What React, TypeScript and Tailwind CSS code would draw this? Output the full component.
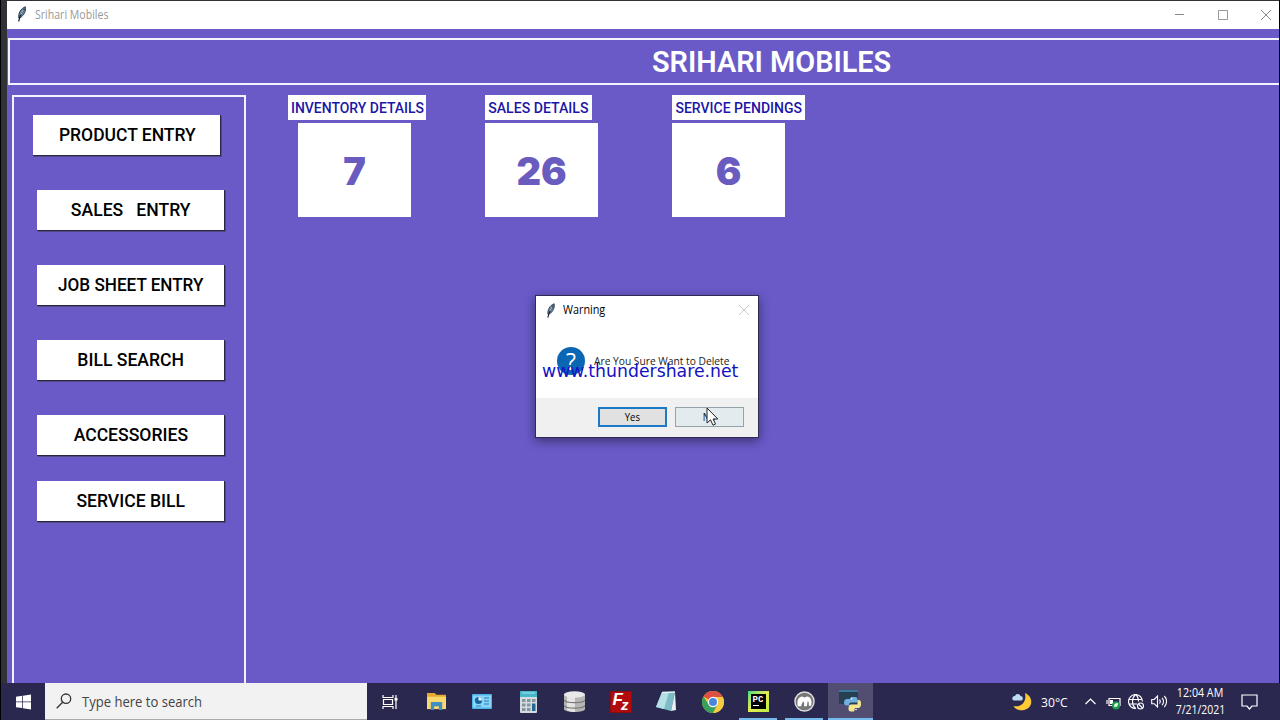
import type {ReactNode} from 'react';

const menuItems = [
  { label: 'PRODUCT ENTRY', place: 'mt-[18px] ml-[19px]', text: 'scale-x-[0.92]' },
  { label: 'SALES   ENTRY', place: 'mt-[34px] ml-[23px]', text: 'scale-x-[0.925]' },
  { label: 'JOB SHEET ENTRY', place: 'mt-[34px] ml-[23px]', text: 'scale-x-[0.9]' },
  { label: 'BILL SEARCH', place: 'mt-[34px] ml-[23px]', text: 'scale-x-[0.925]' },
  { label: 'ACCESSORIES', place: 'mt-[34px] ml-[23px]', text: 'scale-x-[0.925]' },
  { label: 'SERVICE BILL', place: 'mt-[25px] ml-[23px]', text: 'scale-x-[0.925]' },
];

const stats = [
  { label: 'INVENTORY DETAILS', value: 7, labelWidth: 'w-[138px]', column: 'w-[197px]', box: 'ml-[10px]', text: 'scale-x-[0.93]' },
  { label: 'SALES DETAILS', value: 26, labelWidth: 'w-[107px]', column: 'w-[187px]', box: '', text: 'scale-x-[0.94]' },
  { label: 'SERVICE PENDINGS', value: 6, labelWidth: 'w-[133px]', column: 'w-[187px]', box: '', text: 'scale-x-[0.935]' },
];

const Feather = ({ className }: { className?: string }) => (
  <svg viewBox="0 0 12 16" className={className}>
    <path d="M2.800 12C2 8 4.500 2.500 9.300.8c1 4-1.300 8.500-5 10.900z" fill="#6f8ba5" stroke="#1d2f44" strokeWidth=".9" />
    <path d="M2.600 15.500 4 10.500 8.500 2.800" fill="none" stroke="#101820" strokeWidth="1.100" />
    <path d="M5 8.500 7.500 4" stroke="#c9dbe8" strokeWidth=".9" />
  </svg>
);

const TitleBar = () => (
  <div className="h-7 bg-white flex items-center text-[#999]">
    <Feather className="ml-[9px] w-3 h-4 -mt-0.5" />
    <span className="ml-[7px] text-[12px] whitespace-pre origin-left scale-x-[0.88]">Srihari Mobiles</span>
    <div className="ml-auto flex items-center gap-[33px] pr-[8px]">
      <svg className="w-[10px] h-[10px]" viewBox="0 0 10 10"><path d="M0 4.500h9" stroke="#888" /></svg>
      <svg className="w-[10px] h-[10px]" viewBox="0 0 10 10"><path d="M.5.5h9v9h-9z" stroke="#999" fill="none" /></svg>
      <svg className="w-[10px] h-[10px]" viewBox="0 0 10 10"><path d="m0 0 10 10M10 0 0 10" stroke="#888" /></svg>
    </div>
  </div>
);

const Sidebar = () => (
  <div className="w-[234px] shrink-0 border-2 border-b-0 border-[#f4f2ff]">
    {menuItems.map(item => (
      <div
        key={item.label}
        className={`${item.place} w-[188px] h-[41px] bg-white border-r border-b border-[#29263f] shadow-[1px_1px_0_#514a86] flex items-center justify-center`}
      >
        <span className={`${item.text} mt-[1px] ml-[1px] whitespace-pre font-[Roboto] font-medium text-[19px] text-black`}>{item.label}</span>
      </div>
    ))}
  </div>
);

const StatCard = ({ stat }: { stat: (typeof stats)[number] }) => (
  <div className={`${stat.column} shrink-0`}>
    <div className={`${stat.labelWidth} h-[25px] bg-white flex items-center justify-center`}>
      <span className={`${stat.text} mt-[1px] whitespace-pre font-[Roboto] font-medium text-[15px] text-[#1c16a6]`}>{stat.label}</span>
    </div>
    <div className={`${stat.box} mt-[3px] w-[113px] h-[94px] bg-white flex items-center justify-center`}>
      <span className="font-[Inter] font-black text-[38px] leading-none text-[#6a5bbf] mt-0.5">{stat.value}</span>
    </div>
  </div>
);

const WarningDialog = () => (
  <div className="absolute left-[534px] top-[295px] w-[224px] h-[143px] bg-white border border-[#302a55] shadow-[0_3px_10px_rgba(0,0,0,0.45)] flex flex-col">
    <div className="h-[28px] flex items-center">
      <Feather className="ml-[9px] w-3 h-[15px]" />
      <span className="ml-[6px] text-[12px] text-black origin-left scale-x-[0.9]">Warning</span>
      <svg className="ml-auto mr-[9px] w-[10px] h-[10px]" viewBox="0 0 10 10">
        <path d="m0 0 10 10M10 0 0 10" stroke="#ccc" />
      </svg>
    </div>
    <div className="flex-1 flex items-center pl-[21px]">
      <div className="w-7 h-7 shrink-0 rounded-full bg-[#0b66b4] text-white text-[23px] leading-7 text-center">?</div>
      <span className="ml-[9px] mt-[1px] text-[11px] whitespace-pre text-[#222] origin-left scale-x-[0.93]">Are You Sure Want to Delete</span>
    </div>
    <div className="h-[39px] bg-[#f0f0f0] flex justify-end gap-2 pt-[9px] pr-[14px] text-[10.500px] text-black">
      <div className="w-[69px] h-[20px] border-2 border-[#1d78c8] bg-[#e1e1e1] flex items-center justify-center">
        <span className="scale-x-90 mt-[2px]">Yes</span>
      </div>
      <div className="w-[69px] h-[20px] border border-[#93a3aa] bg-[#e4ebee] flex items-center justify-center">
        <span className="scale-x-90 mt-[2px]">No</span>
      </div>
    </div>
    <span className="absolute left-[6px] top-[63px] whitespace-pre font-['DejaVu_Sans'] text-[18px] leading-6 text-[#1111c4] origin-left scale-x-[0.96]">
      www.thundershare.net
    </span>
    <svg className="absolute left-[170px] top-[111px] w-[13px] h-[19px]" viewBox="0 0 13 19">
      <path d="M1 1v15l3.500-3.200 2.500 5.400 2.500-1.100-2.400-5.100h4.700z" fill="#fff" stroke="#222" />
    </svg>
  </div>
);

const TaskSlot = ({ children, className = '' }: { children: ReactNode; className?: string }) => (
  <div className={`w-[46px] h-full flex items-center justify-center ${className}`}>{children}</div>
);

const RunningSlot = ({ children, active = false }: { children: ReactNode; active?: boolean }) => (
  <div className="w-[46px] h-full flex flex-col items-center">
    <div className={`flex-1 w-[45px] flex items-center justify-center pt-[1px] ${active ? 'bg-[#524e72]' : ''}`}>{children}</div>
    <div className={`h-[2px] bg-[#76b9ed] ${active ? 'w-[45px]' : 'w-[38px]'}`} />
  </div>
);

const Taskbar = () => (
  <div className="h-[37px] shrink-0 bg-[#2b2850] flex items-center text-white">
    <div className="w-[44px] flex justify-center">
      <svg className="w-[15px] h-4" viewBox="0 0 16 16">
        <path d="M0 2.300 6.600 1.300v6.200H0zM7.400 1.200 16 0v7.500H7.400zM0 8.300h6.600v6.200L0 13.600zM7.400 8.300H16V16l-8.600-1.300z" fill="#fff" />
      </svg>
    </div>
    <div className="w-[322px] h-full bg-[#f2f2f2] border-b border-[#aaa] flex items-center">
      <svg className="ml-[11px] w-4 h-4" viewBox="0 0 16 16" fill="none" stroke="#333" strokeWidth="1.300">
        <circle cx="10" cy="5.700" r="4.700" />
        <path d="M6.600 9.200.7 15.300" />
      </svg>
      <span className="ml-[10px] mt-[1px] whitespace-pre text-[14.500px] text-[#444] origin-left scale-x-[0.9]">Type here to search</span>
    </div>
    <TaskSlot>
      <svg className="w-4 h-4" viewBox="0 0 16 16" fill="none" stroke="#fff" strokeWidth="1.200">
        <path d="M1 1v2.500h10V1M1 15v-2.500h10V15M1.500 5.500h9v5h-9zM14 1v14" />
        <path d="M12.500 4h3v2.500h-3z" fill="#fff" stroke="none" />
      </svg>
    </TaskSlot>
    <TaskSlot>
      <svg className="w-[21px] h-[19px]" viewBox="0 0 22 20">
        <path d="M1 1h8l2 2h10v15H1z" fill="#e8a92f" />
        <path d="M1 5h20v13H1z" fill="#fbd86b" />
        <path d="M5 19v-8.500h12V19h-3.500v-4h-5v4z" fill="#3f8fc4" />
      </svg>
    </TaskSlot>
    <TaskSlot>
      <svg className="w-5 h-[15px]" viewBox="0 0 20 15">
        <rect width="20" height="15" rx="1" fill="#4ab4e8" />
        <rect x="1" y="1.500" width="18" height="12" fill="#8bd4f5" />
        <circle cx="6.500" cy="6.500" r="3.600" fill="#17659f" />
        <path d="M6.500 6.500V2.900a3.600 3.600 0 0 1 3.600 3.600z" fill="#dff5ff" />
        <path d="M12 4h5M12 7h5M4 12h5M12 10h5" stroke="#257eb9" strokeWidth="1.200" />
      </svg>
    </TaskSlot>
    <TaskSlot>
      <svg className="w-[17px] h-[22px]" viewBox="0 0 17 22">
        <rect width="17" height="22" rx="1" fill="#d4dce0" />
        <rect width="17" height="6" fill="#48b6c9" />
        <path d="M2 1.500h13v1H2z" fill="#a4e4ec" />
        <path d="M2 8h3.500v3H2zM7 8h3.500v3H7zM12 8h3.500v3H12zM2 12.500h3.500v3H2zM7 12.500h3.500v3H7zM2 17h3.500v3H2zM7 17h3.500v3H7z" fill="#8595a0" />
        <path d="M12 12.500h3.500V20H12z" fill="#236698" />
      </svg>
    </TaskSlot>
    <TaskSlot>
      <svg className="w-[21px] h-[21px]" viewBox="0 0 21 21">
        <path d="M0 3v15c0 4 21 4 21 0V3z" fill="#b5b5b5" />
        <path d="M3 4v15c3 2 6 2 8 2V5z" fill="#e4e4e4" />
        <path d="M0 9c2 3.500 19 3.500 21 0M0 14.500c2 3.500 19 3.500 21 0" fill="none" stroke="#777" strokeWidth="1.200" />
        <ellipse cx="10.500" cy="3.500" rx="10.500" ry="3.300" fill="#e8e8e8" />
      </svg>
    </TaskSlot>
    <TaskSlot className="pl-[1px]">
      <div className="w-[22px] h-[22px] bg-[#b30b0b] border border-[#8a0c10] flex items-center justify-center italic font-['Liberation_Sans'] font-bold leading-none">
        <span className="-mt-1 text-[17px]">F</span>
        <span className="mt-1.5 -ml-0.5 text-[15px]">z</span>
      </div>
    </TaskSlot>
    <TaskSlot>
      <svg className="w-[22px] h-[21px]" viewBox="0 0 22 21">
        <path d="M7 1 20 1 16 20 1 16z" fill="#7bbcc6" />
        <path d="M7 1 14 1 9 18 1 16z" fill="#b5e0e4" />
        <path d="M20 1 21 19 16 20z" fill="#e8f2f2" />
        <path d="m7 1.500 13-.5" stroke="#e3f5f5" strokeWidth="1.500" />
      </svg>
    </TaskSlot>
    <TaskSlot className="pl-[1px]">
      <svg className="w-[22px] h-[22px]" viewBox="0 0 24 24">
        <circle cx="12" cy="12" r="12" fill="#f5c83a" />
        <path d="M12 12 1.600 6A12 12 0 0 1 22.400 6z" fill="#dd5144" />
        <path d="M1.600 6A12 12 0 0 0 12 24l5-9-10-.5z" fill="#37a05b" />
        <path d="M12 6.500h10.700A12 12 0 0 1 12 24l5-9z" fill="#f6cb43" />
        <circle cx="12" cy="12" r="5.600" fill="#fff" />
        <circle cx="12" cy="12" r="4.400" fill="#4a86df" />
      </svg>
    </TaskSlot>
    <RunningSlot>
      <div className="w-[21px] h-[21px] p-[3px] bg-linear-to-br from-[#28d97b] via-[#e5ed4d] to-[#b9ec49]">
        <div className="w-full h-full bg-black pl-[2px] pt-[2px] font-['Liberation_Mono'] font-bold text-[9px] leading-[8px]">
          PC
          <div className="mt-[1px] w-[6px] h-[1px] bg-white" />
        </div>
      </div>
    </RunningSlot>
    <RunningSlot>
      <svg className="w-[21px] h-[21px]" viewBox="0 0 22 22">
        <circle cx="11" cy="11" r="10" fill="#777" stroke="#ddd" strokeWidth="1.500" />
        <path d="M4 16c-1-5 0-9 3.500-10 2-.5 2.500.8 3.500.8S13 5 15 6c3 1 4 5 3 9.500h-2.500c.2-2.500 0-4-1-5-.6 2-.7 3.500-1 5.500h-3c.2-2 .2-3.500-.3-5.200C8.500 12 8 14 7.500 16z" fill="#fff" />
      </svg>
    </RunningSlot>
    <RunningSlot active>
      <svg className="w-[22px] h-[22px]" viewBox="0 0 22 22">
        <path d="M0 0h19v14H0z" fill="#263f51" />
        <path d="M0 0h19v2H0z" fill="#39799e" />
        <path d="M12 7h4c2 0 2.500 1 2.500 3v2.500h-6c-2 0-2.500 1-2.500 3H8c-2 0-3-1-3-3s1-3.500 3-3.500h3z" fill="#6fb0de" />
        <path d="M15 21.500h-3c-2 0-2.500-1-2.500-3 0-3 1-4 3-4h6V10h1c2 0 2.500 1.500 2.500 4s-1 4-3 4h-3z" fill="#f4e78f" />
        <circle cx="12.500" cy="8.800" r=".8" fill="#fff" />
        <circle cx="17" cy="19.500" r=".8" fill="#fff" />
      </svg>
    </RunningSlot>
    <div className="ml-auto h-full flex items-center">
      <svg className="w-5 h-[19px]" viewBox="0 0 20 19">
        <path d="M13 1c9 4 8 15-1 17-5 1-9-1-10.500-4C9 15.500 15 10 13 1z" fill="#ffca35" />
        <path d="M2 8.500c-3-1-1.500-5 1-4.500 1-3 5-2.500 5.500 0 3 0 3 4.500.5 4.500z" fill="#bcdcf2" />
      </svg>
      <span className="ml-[9px] mt-[1px] w-[34px] whitespace-pre text-[13.500px] origin-left scale-x-[0.9]">30°C</span>
      <svg className="ml-[10px] w-[11px] h-[7px]" viewBox="0 0 11 7"><path d="m.5 6 5-5 5 5" fill="none" stroke="#fff" strokeWidth="1.200" /></svg>
      <svg className="ml-[10px] mt-1 w-[15px] h-[13px]" viewBox="0 0 15 13">
        <path d="M3 1.500h11v7H3zM1 3v4" fill="none" stroke="#fff" strokeWidth="1.200" />
        <path d="M4 3h3v4H4z" fill="#fff" />
        <circle cx="10" cy="8.500" r="4" fill="#219a4b" />
        <path d="M8 9.500c0-3 2-3.500 4-3.500 0 3-1 4-3 4" fill="#dbffe5" />
      </svg>
      <svg className="ml-[7px] w-4 h-4" viewBox="0 0 16 16" fill="none" stroke="#fff" strokeWidth="1.100">
        <path d="M14.500 7.500A7 7 0 1 0 8 14.500M1 5.500h13M1 10h8M7.500.5C3.500 4 3.500 11 7.500 14.500M7.500.5c2 1.500 3 4 3 7" />
        <circle cx="12.500" cy="12" r="3" />
        <path d="m10.500 10 4 4" />
      </svg>
      <svg className="ml-[7px] w-4 h-[13px]" viewBox="0 0 16 13" fill="none" stroke="#fff" strokeWidth="1.100">
        <path d="M.7 4.500h2.500L6.500 1v11L3.200 8.700H.7zM8.500 4.500c1 1 1 3 0 4M11 2.800c2 2 2 5.400 0 7.400M13.300 1c3 3 3 8 0 11" />
      </svg>
      <div className="ml-[6px] w-[54px] flex flex-col items-center text-[12px] leading-[17px] whitespace-pre">
        <span className="-mt-[1px] scale-x-[0.89]">12:04 AM</span>
        <span className="scale-x-[0.87]">7/21/2021</span>
      </div>
      <svg className="ml-[14px] mr-[22px] w-[17px] h-[16px]" viewBox="0 0 17 16">
        <path d="M1 1h15v11h-5l-2.500 3L6 12H1z" fill="none" stroke="#fff" strokeWidth="1.200" />
      </svg>
    </div>
  </div>
);

export default function App() {
  return (
    <div className="relative w-[1280px] h-[720px] overflow-hidden bg-[#303238] border-l border-black flex flex-col font-['Open_Sans',sans-serif]">
      <div className="flex-1 min-h-0 pt-px pl-[6px] flex flex-col border-r border-black">
        <TitleBar />
        <div className="flex-1 min-h-0 bg-[#695ac8] pt-[9px] flex flex-col">
          <div className="ml-[1px] h-[47px] shrink-0 border-2 border-r-0 border-[#f4f2ff] flex items-center pl-[642px]">
            <span className="mt-[2px] font-[Roboto] font-semibold text-[29px] text-white whitespace-pre origin-left scale-x-[0.995]">SRIHARI MOBILES</span>
          </div>
          <div className="flex-1 min-h-0 mt-[10px] ml-[5px] flex">
            <Sidebar />
            <div className="ml-[42px] flex">
              {stats.map(stat => <StatCard key={stat.label} stat={stat} />)}
            </div>
          </div>
        </div>
      </div>
      <Taskbar />
      <WarningDialog />
    </div>
  );
}
